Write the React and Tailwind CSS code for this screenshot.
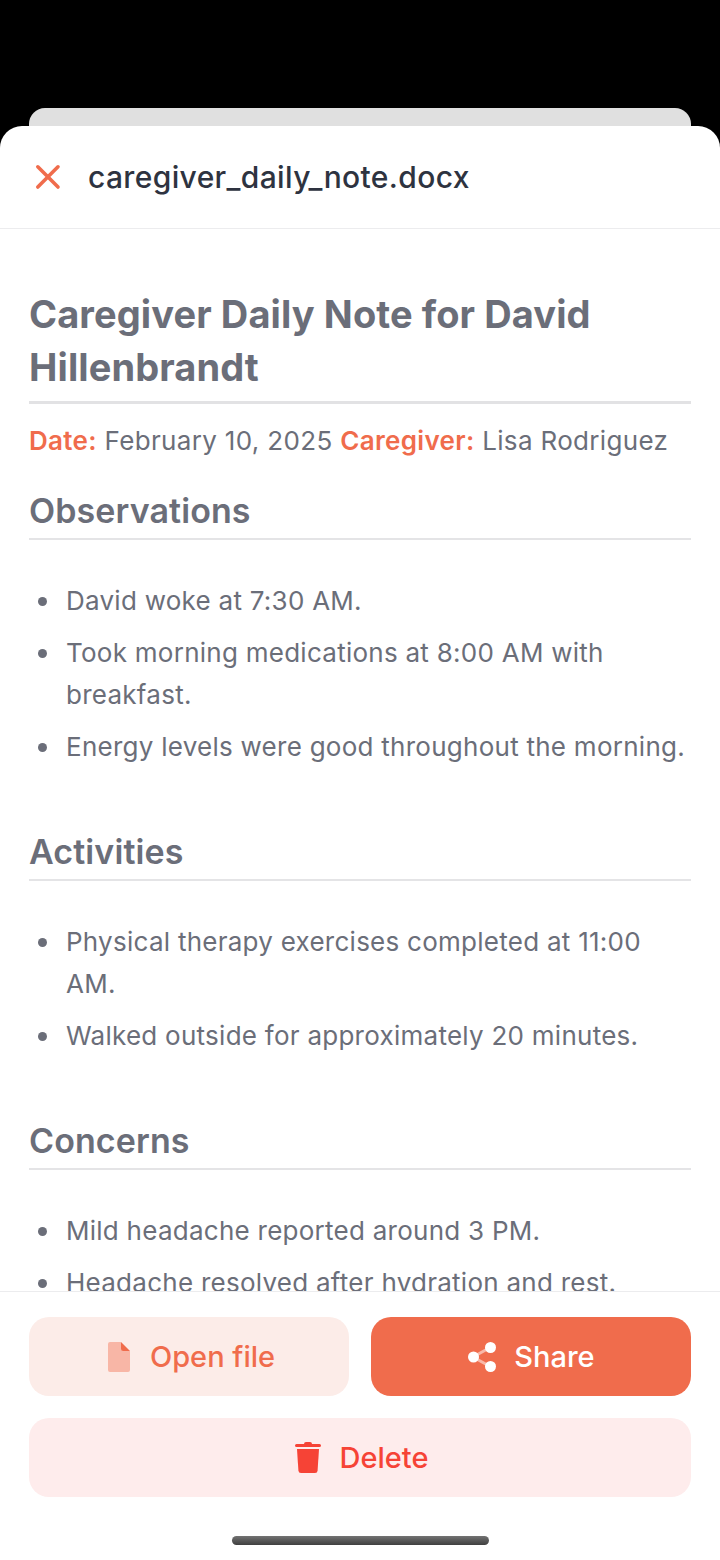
import React from 'react';

const SECTIONS = [
  {
    title: 'Observations',
    items: [
      'David woke at 7:30 AM.',
      'Took morning medications at 8:00 AM with breakfast.',
      'Energy levels were good throughout the morning.',
    ],
  },
  {
    title: 'Activities',
    items: [
      'Physical therapy exercises completed at 11:00 AM.',
      'Walked outside for approximately 20 minutes.',
    ],
  },
  {
    title: 'Concerns',
    items: ['Mild headache reported around 3 PM.', 'Headache resolved after hydration and rest.'],
  },
];

function CloseIcon() {
  return (
    <svg width="28" height="28" viewBox="0 0 28 28" fill="none" stroke="#f06c4c" strokeWidth="3.6" strokeLinecap="round">
      <path d="M3.8 3.8 L24 24 M24 3.8 L3.8 24" />
    </svg>
  );
}

function FileIcon() {
  return (
    <svg width="22" height="30" viewBox="0 0 22 30">
      <path d="M2 0 H13 V6 Q13 9 16 9 H22 V28 Q22 30 20 30 H2 Q0 30 0 28 V2 Q0 0 2 0 Z" fill="#f8b6a6" />
      <path d="M13 0 L22 9 H15 Q13 9 13 7 Z" fill="#f06c4c" />
    </svg>
  );
}

function ShareIcon() {
  return (
    <svg width="28" height="30" viewBox="0 0 28 30">
      <path d="M5 15 L23 5 M5 15 L23 25" stroke="#f9b8a8" strokeWidth="3" />
      <circle cx="5.5" cy="15" r="5.5" fill="#fff" />
      <circle cx="22.5" cy="5.5" r="5.5" fill="#fff" />
      <circle cx="22.5" cy="24.5" r="5.5" fill="#fff" />
    </svg>
  );
}

function TrashIcon() {
  return (
    <svg width="26" height="31" viewBox="0 0 26 31" fill="#f64336">
      <path d="M9 2 Q9 0 11 0 H15 Q17 0 17 2 H24.5 Q26 2 26 3.5 Q26 5 24.5 5 H1.5 Q0 5 0 3.5 Q0 2 1.5 2 Z" />
      <path d="M2 7 H24 L22.6 28.5 Q22.4 31 20 31 H6 Q3.6 31 3.4 28.5 Z" />
    </svg>
  );
}

export default function App() {
  return (
    <div className="w-[720px] h-[1560px] bg-black pt-[108px] flex flex-col overflow-hidden font-['Inter',sans-serif]">
      <div className="mx-[29px] h-[18px] shrink-0 bg-[#e0e0e0] rounded-t-[16px]" />
      <div className="flex-1 min-h-0 flex flex-col bg-white rounded-t-[22px]">
        <header className="h-[103px] shrink-0 flex items-center pl-[34px] border-b border-[#ececee]">
          <CloseIcon />
          <h2 className="ml-[26px] text-[30px] font-medium tracking-[0.36px] text-[#2e3340]">caregiver_daily_note.docx</h2>
        </header>

        <main className="flex-1 min-h-0 overflow-hidden px-[29px] pt-[59px] text-[#6b6e79]">
          <h1 className="text-[38px] leading-[53px] font-bold tracking-[0.1px] pb-[7px] border-b-[3px] border-[#e2e2e4]">
            Caregiver Daily Note for David Hillenbrandt
          </h1>
          <p className="mt-[16px] text-[26px] leading-[42px] tracking-[0.33px] whitespace-nowrap">
            <b className="font-semibold text-[#f06c4c]">Date:</b> February 10, 2025{' '}
            <b className="font-semibold text-[#f06c4c]">Caregiver:</b> Lisa Rodriguez
          </p>
          {SECTIONS.map((s) => (
            <section key={s.title}>
              <h3 className="mt-[27px] text-[34px] leading-[44px] font-semibold tracking-[0.1px] pb-[5px] border-b-2 border-[#e4e4e6]">
                {s.title}
              </h3>
              <ul className="mt-[40px] mb-[62px] flex flex-col gap-[10px] text-[26px] leading-[42px] tracking-[0.26px]">
                {s.items.map((t) => (
                  <li key={t} className="flex pl-[9px] gap-[19px]">
                    <span className="mt-[17px] w-[9px] h-[9px] shrink-0 rounded-full bg-[#6b6e79]" />
                    <span>{t}</span>
                  </li>
                ))}
              </ul>
            </section>
          ))}
        </main>

        <footer className="h-[269px] shrink-0 border-t border-[#ececee] px-[29px] pt-[25px] flex flex-col">
          <div className="grid grid-cols-2 gap-[22px]">
            <button type="button" className="h-[79px] pl-[5px] rounded-[20px] bg-[#fcece8] flex items-center justify-center gap-[20px] text-[29px] font-medium text-[#f06c4c]">
              <FileIcon />
              Open file
            </button>
            <button type="button" className="h-[79px] pl-[1px] rounded-[20px] bg-[#f06c4c] flex items-center justify-center gap-[18px] text-[29px] font-medium text-white">
              <ShareIcon />
              Share
            </button>
          </div>
          <button type="button" className="mt-[22px] h-[79px] pl-[3px] rounded-[20px] bg-[#feecec] flex items-center justify-center gap-[19px] text-[29px] font-medium text-[#f64336]">
            <TrashIcon />
            Delete
          </button>
          <div className="mt-[39px] mx-auto w-[257px] h-[9px] rounded-full bg-gradient-to-b from-[#737373] to-[#404040]" />
        </footer>
      </div>
    </div>
  );
}
